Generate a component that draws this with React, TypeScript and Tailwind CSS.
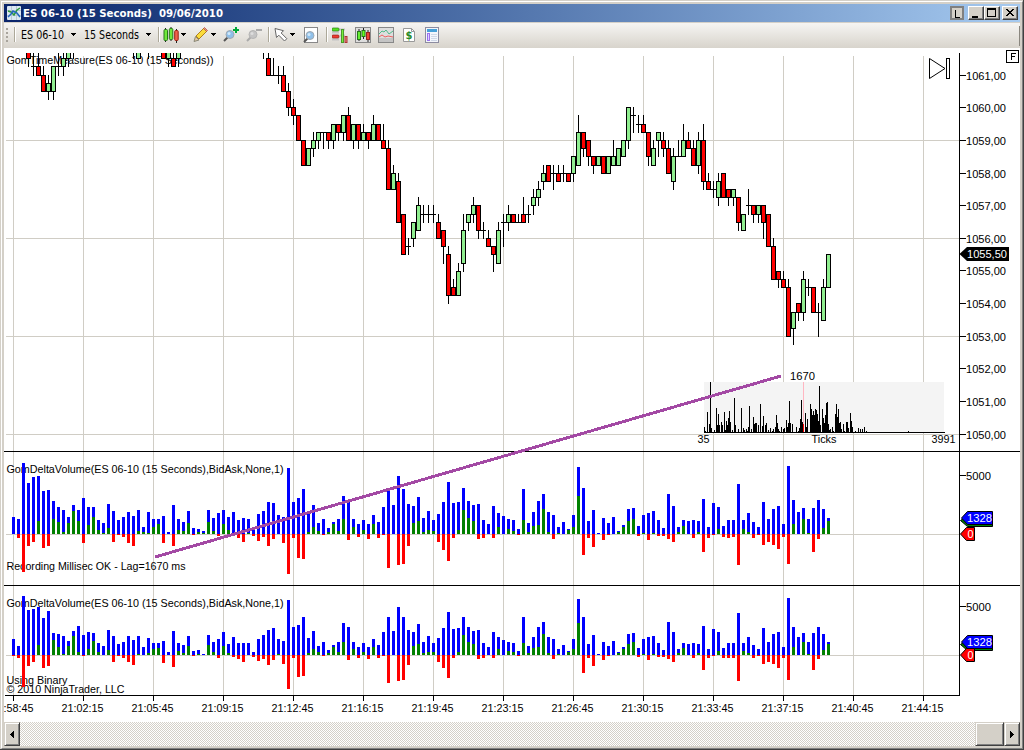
import type { ReactNode } from "react";

const TAHOMA = "font-['DejaVu_Sans_Condensed','Noto_Sans',sans-serif]";

// [x, high, body top, body bottom, low, up] in ticks below 1059,00
type Candle = [number, number, number, number, number, number];

const candles: Candle[] = [
    [28, -12, -12, -10, -9, 0], [33, -12, -9, -9, -8, 0], [38, -12, -9, -8, -8, 0], [43, -9, -8, -6, -6, 0],
    [48, -8, -7, -6, -5, 1], [53, -9, -9, -6, -5, 1], [58, -12, -9, -9, -8, 1], [63, -12, -10, -9, -8, 1],
    [68, -12, -12, -10, -9, 1], [73, -12, -12, -12, -10, 1], [133, -12, -12, -12, -10, 1], [138, -12, -12, -10, -10, 1],
    [148, -12, -12, -12, -10, 1], [163, -12, -12, -10, -10, 0], [168, -12, -12, -10, -9, 1], [173, -12, -10, -9, -9, 0],
    [178, -12, -12, -10, -9, 1],
    [263, -12, -12, -12, -10, 1], [268, -12, -10, -8, -8, 0], [273, -10, -8, -8, -8, 0], [278, -9, -8, -8, -7, 0],
    [283, -9, -8, -6, -6, 0], [288, -7, -6, -4, -3, 0], [293, -5, -4, -3, -2, 0], [298, -3, -3, 0, 0, 0],
    [303, 0, 0, 3, 3, 0], [308, 1, 1, 3, 3, 1], [313, -1, 0, 1, 2, 1], [318, -1, -1, 0, 1, 1],
    [323, -1, -1, -1, 1, 0], [328, -1, -1, 0, 1, 0], [333, -2, -2, 0, 1, 1], [338, -2, -2, -1, 0, 0],
    [343, -3, -3, -1, 0, 1], [348, -4, -3, 0, 0, 0], [353, -2, -2, 0, 1, 1], [358, -2, -2, 0, 1, 0],
    [363, -2, -1, 0, 0, 1], [368, -1, -1, 0, 1, 0], [373, -3, -2, 0, 0, 1], [378, -2, -2, 0, 0, 0],
    [383, -2, 0, 1, 1, 0], [388, 0, 1, 6, 6, 0], [393, 3, 4, 6, 6, 1], [398, 4, 5, 10, 10, 0],
    [403, 9, 9, 14, 14, 0], [408, 12, 13, 13, 14, 1], [413, 10, 10, 12, 13, 1], [418, 7, 8, 11, 11, 1],
    [423, 8, 9, 9, 10, 1], [428, 8, 9, 9, 10, 1], [433, 8, 9, 9, 10, 1], [438, 9, 10, 12, 12, 0],
    [443, 11, 11, 13, 15, 0], [448, 13, 14, 19, 20, 0], [453, 17, 18, 19, 19, 0], [458, 15, 16, 19, 19, 1],
    [463, 9, 11, 15, 16, 1], [468, 9, 9, 10, 11, 1], [473, 7, 8, 9, 10, 1], [478, 8, 8, 11, 12, 0],
    [483, 10, 11, 11, 12, 1], [488, 11, 12, 13, 13, 0], [493, 13, 13, 14, 16, 0], [498, 10, 11, 15, 15, 1],
    [503, 9, 10, 10, 13, 1], [508, 8, 9, 10, 11, 1], [513, 9, 9, 10, 10, 0], [518, 9, 10, 10, 10, 1],
    [523, 7, 9, 10, 10, 0], [528, 8, 9, 9, 10, 1], [533, 6, 7, 8, 9, 1], [538, 5, 6, 7, 8, 1],
    [543, 3, 4, 5, 6, 1], [548, 3, 3, 5, 5, 0], [553, 3, 4, 4, 6, 1], [558, 3, 4, 5, 5, 0],
    [563, 3, 4, 4, 5, 1], [568, 4, 4, 5, 5, 0], [573, 2, 2, 4, 5, 1], [578, -3, -1, 3, 3, 1],
    [583, -1, -1, 1, 2, 0], [588, 0, 0, 2, 3, 0], [593, 2, 2, 3, 4, 0], [598, 2, 2, 3, 3, 1],
    [603, 2, 2, 4, 4, 0], [608, 2, 2, 4, 4, 1], [613, 0, 2, 3, 3, 1], [618, 1, 1, 3, 3, 1],
    [623, 0, 0, 2, 2, 1], [628, -4, -4, 0, 1, 1], [633, -4, -3, -3, -1, 1], [638, -3, -2, -2, -1, 1],
    [643, -3, -2, -1, -1, 0], [648, -1, -1, 2, 3, 0], [653, 0, 1, 3, 3, 1], [658, -1, -1, 0, 2, 1],
    [663, -1, 0, 1, 2, 0], [668, 0, 1, 4, 4, 0], [673, 1, 2, 5, 6, 1], [678, 0, 2, 2, 2, 1],
    [683, -2, 0, 2, 2, 1], [688, -1, 0, 1, 1, 0], [693, 0, 1, 3, 3, 0], [698, -1, 0, 3, 4, 1],
    [703, -2, 0, 5, 6, 0], [708, 4, 5, 6, 6, 0], [713, 5, 6, 6, 7, 1], [718, 4, 5, 7, 8, 1],
    [723, 4, 4, 7, 7, 0], [728, 6, 6, 7, 8, 0], [733, 6, 6, 7, 8, 1], [738, 7, 7, 10, 11, 0],
    [743, 9, 9, 11, 11, 1], [748, 6, 8, 8, 9, 1], [753, 8, 8, 9, 10, 0], [758, 8, 8, 9, 10, 1],
    [763, 8, 8, 10, 12, 0], [768, 9, 9, 13, 13, 0], [773, 12, 13, 17, 17, 0], [778, 16, 16, 17, 18, 0],
    [783, 16, 17, 18, 18, 0], [788, 17, 18, 24, 24, 0], [793, 21, 21, 23, 25, 1], [798, 20, 20, 21, 22, 0],
    [803, 16, 17, 21, 22, 1], [808, 17, 18, 18, 19, 1], [813, 18, 18, 21, 21, 0], [818, 20, 21, 21, 24, 1],
    [823, 17, 18, 22, 22, 1], [828, 14, 14, 18, 18, 1],
];

// volume, delta pairs, one per bar
const volumeA = [
    17, 0, 15, -4, 71, -38, 51, -12, 57, -8, 58, 13, 43, -14, 44, -12, 33, 15, 27, 12,
    24, 2, 17, 11, 29, 23, 24, 13, 36, -9, 27, 9, 27, 17, 14, 4, 11, 1, 30, 6,
    23, -8, 14, -1, 17, -3, 22, -9, 18, -12, 24, 3, 7, 2, 22, 1, 15, 7, 15, 10,
    18, -9, 2, 0, 29, -12, 15, 4, 12, 3, 23, 11, 6, -1, 5, 2, 3, 1, 24, 12,
    16, 3, 21, -2, 24, 10, 17, 4, 22, -2, 14, -4, 16, -8, 15, 1, 4, -2, 20, -7,
    23, -3, 32, -12, 31, -5, 19, 0, 17, -9, 66, -40, 32, -4, 36, -24, 45, -25, 20, 2,
    29, 7, 11, 3, 15, -1, 6, 2, 12, 10, 15, 3, 38, 15, 34, -6, 15, 7, 10, -3,
    14, 4, 10, -5, 19, 10, 12, -4, 27, -1, 45, -34, 29, 0, 58, -31, 45, -30, 30, -12,
    28, 11, 37, 13, 16, 2, 23, 4, 14, 3, 20, -8, 32, -16, 52, -27, 31, -4, 32, 4,
    46, 24, 33, 16, 29, 13, 30, -5, 14, -4, 10, 0, 28, -4, 21, 7, 18, 0, 15, 5,
    14, 3, 5, -1, 45, 14, 11, 2, 22, 8, 33, 9, 40, 25, 22, 2, 19, -5, 7, 1,
    12, 0, 5, 4, 19, 7, 67, 38, 46, -21, 13, -4, 24, -13, 1, 0, 16, -6, 11, -1,
    17, 0, 3, 2, 9, 7, 25, 13, 26, 15, 8, -2, 19, 1, 21, -6, 23, 1, 14, -2,
    6, -2, 40, -5, 28, -8, 7, 2, 14, 8, 13, 0, 14, -4, 13, 2, 35, -18, 7, -4,
    31, -1, 27, 5, 8, -3, 14, -4, 14, -3, 50, -31, 14, 5, 21, 2, 12, -4, 7, -1,
    32, -11, 15, -8, 25, -11, 28, -15, 10, -3, 68, -30, 34, 10, 22, 0, 26, 15, 15, 1,
    26, -18, 34, -5, 25, 6, 16, 13,
];

const volumeBHead = [
    16, -1, 9, -3, 59, -32, 45, -11, 46, -7, 48, 10, 37, -13, 44, -11, 22, 15, 21, 8,
    19, 1, 14, 9, 24, 19, 29, 3, 20, -1, 23, 6, 22, 14, 12, 3, 9, 0, 25, 5,
    19, -7, 11, -1, 13, -3, 19, -7, 15, -10, 19, 1, 8, 0, 17, 2, 12, 6, 12, 7,
    14, -8, 3, 0, 24, -12, 12, 4, 10, 2, 19, 9, 4, -1, 5, 1, 1, 0, 20, 10,
    13, 3, 16, -3, 23, 9, 11, 2, 18, -2, 12, -4, 12, -7, 12, 0, 3, -2, 16, -6,
    20, -4, 25, -10, 27, -5, 16, 1, 14, -9, 55, -34, 28, -3, 30, -22,
];
const volumeB = volumeBHead.concat(
    volumeA.slice(volumeBHead.length).map((v) => Math.round(v * 0.835))
);

// offset from x=704, bar height
const tickBars: [number, number][] = [
    [0, 5], [1, 1], [3, 20], [5, 8], [6, 50], [7, 4], [10, 2], [12, 24], [13, 7], [14, 18], [15, 7], [17, 10],
    [18, 7], [20, 20], [21, 2], [22, 11], [23, 7], [24, 14], [25, 21], [26, 10], [28, 2], [30, 34], [31, 7],
    [34, 3], [37, 24], [39, 4], [40, 2], [42, 3], [43, 1], [44, 5], [45, 26], [47, 3], [49, 15], [50, 8],
    [51, 9], [52, 9], [54, 7], [56, 28], [58, 6], [59, 16], [61, 7], [62, 9], [64, 2], [66, 4], [68, 1],
    [69, 3], [71, 5], [72, 17], [73, 9], [74, 3], [75, 1], [77, 5], [79, 3], [80, 4], [82, 12], [83, 5],
    [84, 9], [85, 31], [86, 9], [88, 8], [92, 5], [94, 1], [95, 4], [96, 13], [97, 32], [98, 10], [101, 19],
    [102, 5], [103, 13], [106, 28], [107, 23], [108, 17], [109, 21], [110, 17], [111, 23], [112, 22],
    [113, 18], [114, 11], [115, 46], [116, 7], [118, 23], [119, 14], [120, 9], [121, 17], [122, 29],
    [123, 30], [124, 8], [125, 2], [126, 3], [128, 5], [129, 1], [131, 18], [132, 28], [133, 15], [134, 23],
    [135, 9], [136, 10], [137, 3], [139, 8], [140, 1], [142, 10], [143, 10], [144, 4], [146, 19], [147, 11],
    [148, 5], [151, 1], [154, 4], [156, 3], [158, 3], [160, 5], [162, 1], [204, 1],
];

const prices: [string, number][] = [
    ["1061,00", 75], ["1060,00", 107], ["1059,00", 140], ["1058,00", 173], ["1057,00", 205], ["1056,00", 238],
    ["1055,00", 270], ["1054,00", 303], ["1053,00", 336], ["1052,00", 368], ["1051,00", 401], ["1050,00", 434],
];

const times = [
    "20:58:45", "21:02:15", "21:05:45", "21:09:15", "21:12:45", "21:16:15", "21:19:45",
    "21:23:15", "21:26:45", "21:30:15", "21:33:45", "21:37:15", "21:40:45", "21:44:15",
];

const yOf = (k: number) => Math.round(140 + k * 8.17);

export default function App() {
    return (
        <div className={`flex h-[750px] w-[1024px] flex-col border-r border-b border-[#404040] bg-[#d4d0c8] ${TAHOMA}`}>
            <div className="flex min-h-0 flex-1 flex-col border-t border-l border-[#d4d0c8]">
                <div className="flex min-h-0 flex-1 flex-col border border-t-white border-r-[#808080] border-b-[#808080] border-l-white p-[2px]">
                    <TitleBar />
                    <Toolbar />
                    <Chart />
                    <ScrollBar />
                </div>
            </div>
        </div>
    );
}

function TitleBar() {
    return (
        <div className="flex h-[18px] shrink-0 items-center bg-linear-to-r from-[#0a246a] to-[#a6caf0] pr-[2px] pl-[3px]">
            <svg width="14" height="14" viewBox="0 0 14 14" className="shrink-0">
                <rect width="14" height="14" rx="1" fill="#dce8f2" />
                <path d="M0 4.5h14M0 9.5h14M4.5 0v14M9.5 0v14" stroke="#b9c8d4" />
                <path d="M1 5l3 1 3 3 3-5 3-2" fill="none" stroke="#2e9a3c" strokeWidth="1.5" />
                <path d="M1 11l3-3 2-3 4 2 3 4" fill="none" stroke="#2466c0" strokeWidth="1.5" />
            </svg>
            <svg width="204" height="18" className="ml-[2px] shrink-0">
                <text x="0" y="13" fill="#fff" fontSize="11" fontWeight="bold" textLength="200" lengthAdjust="spacingAndGlyphs" xmlSpace="preserve" className="whitespace-pre">
                    {"ES 06-10 (15 Seconds)  09/06/2010"}
                </text>
            </svg>
            <div className="ml-auto flex h-[14px]">
                <svg width="14" height="14" className="mr-1" shapeRendering="crispEdges">
                    <rect width="14" height="14" fill="#808080" />
                    <rect x="2" y="2" width="10" height="10" fill="#d4d0c8" />
                    <path d="M5.5 4v7.5H10" fill="none" stroke="#000" />
                </svg>
                <CaptionButton>
                    <rect x="3" y="9" width="6" height="2" />
                </CaptionButton>
                <CaptionButton>
                    <path d="M2 1h9v9H2zM3 3v6h7V3z" fillRule="evenodd" />
                </CaptionButton>
                <div className="w-[2px]" />
                <CaptionButton>
                    <path d="M3 2h2v1h1v1h2V3h1V2h2v1h-1v1H9v1H8v1h1v1h1v1h1v1H9V8H8V7H6v1H5v1H3V8h1V7h1V6h1V5H5V4H4V3H3z" />
                </CaptionButton>
            </div>
        </div>
    );
}

function CaptionButton({ children }: { children: ReactNode }) {
    return (
        <div className="h-[14px] w-4 border border-t-white border-r-[#404040] border-b-[#404040] border-l-white bg-[#d4d0c8] shadow-[inset_-1px_-1px_0_#808080]">
            <svg width="14" height="12" shapeRendering="crispEdges">
                {children}
            </svg>
        </div>
    );
}

function Arrow() {
    return (
        <svg width="5" height="3" className="shrink-0" shapeRendering="crispEdges">
            <path d="M0 0h5v1H4v1H3v1H2V2H1V1H0z" />
        </svg>
    );
}

function Separator() {
    return <div className="h-[15px] w-[2px] shrink-0 border-r border-l border-r-white border-l-[#aca899]" />;
}

function ToolText({ text, width }: { text: string; width: number }) {
    return (
        <svg width={width} height="16" className="shrink-0 overflow-visible">
            <text x="0" y="12" fontSize="11.5" textLength={width} lengthAdjust="spacingAndGlyphs">
                {text}
            </text>
        </svg>
    );
}

function Magnifier({ muted = false }: { muted?: boolean }) {
    return (
        <g>
            <path d="M1 14l4-4" stroke={muted ? "#aaa" : "#555"} strokeWidth="2" />
            <circle cx="7" cy="7.5" r="4" fill={muted ? "#c4c4c4" : "#8fc0ea"} stroke={muted ? "#b4b4b4" : "#a0a8b0"} />
            <circle cx="6" cy="6.5" r="1.5" fill={muted ? "#ddd" : "#cfe8fa"} />
        </g>
    );
}

function Icon({ children }: { children: ReactNode }) {
    return (
        <svg width="16" height="16" viewBox="0 0 16 16" className="shrink-0">
            {children}
        </svg>
    );
}

function Toolbar() {
    return (
        <div className="flex h-[26px] shrink-0 items-center border-t border-[#d4d0c8] bg-linear-to-b from-[#f6f5f3] to-[#d8d4cc] pb-[2px] pl-[2px]">
            <svg width="3" height="16" className="shrink-0" fill="#a8a49c">
                <path d="M0 1h2v2H0zM0 5h2v2H0zM0 9h2v2H0zM0 13h2v2H0z" />
            </svg>
            <div className="w-[5px]" />
            <Separator />
            <div className="w-[5px]" />
            <ToolText text="ES 06-10" width={43} />
            <div className="w-[7px]" />
            <Arrow />
            <div className="w-[8px]" />
            <ToolText text="15 Seconds" width={55} />
            <div className="w-[7px]" />
            <Arrow />
            <div className="w-[7px]" />
            <Separator />
            <div className="w-[3px]" />
            <svg width="16" height="16" className="shrink-0">
                <path d="M2.5 1v14M8 0v14M13.5 2v14" stroke="#222" />
                <rect x="1" y="2.5" width="3.500" height="11" rx="1" fill="#6fe83a" stroke="#27751a" />
                <rect x="6.300" y="1.500" width="3.500" height="11" rx="1" fill="#6fe83a" stroke="#27751a" />
                <rect x="11.700" y="3.500" width="3.500" height="10" rx="1" fill="#f0624c" stroke="#962010" />
            </svg>
            <div className="w-[2px]" />
            <Arrow />
            <div className="w-[7px]" />
            <Icon>
                <path d="M1 14.500l1.500-5 3.500 3.500z" fill="#e8c8a0" stroke="#887" />
                <path d="M3 9l8-8 3 3-8 8z" fill="#fbdc3c" stroke="#b08020" />
                <path d="M10.500 1.500l1-1 3 3-1 1z" fill="#f09080" stroke="#a05040" strokeWidth=".7" />
            </Icon>
            <div className="w-[2px]" />
            <Arrow />
            <div className="w-[7px]" />
            <Icon>
                <Magnifier />
                <path d="M13 0v6M10 3h6" stroke="#00a838" strokeWidth="2" />
            </Icon>
            <div className="w-[7px]" />
            <Icon>
                <Magnifier muted />
                <path d="M10 3h6" stroke="#aaa" strokeWidth="2" />
            </Icon>
            <div className="w-[6px]" />
            <Separator />
            <div className="w-[4px]" />
            <Icon>
                <path d="M1 1.500l1.500 9 2.300-2.300 5.700 5.800 2.300-2.300L7.200 6l2.300-2.300z" fill="#fff" stroke="#666" />
            </Icon>
            <Arrow />
            <div className="w-[8px]" />
            <Icon>
                <rect x="1.5" y=".5" width="13" height="15" fill="#fff" stroke="#888" />
                <g transform="translate(0 1)">
                    <Magnifier />
                </g>
            </Icon>
            <div className="w-[7px]" />
            <Separator />
            <div className="w-[4px]" />
            <Icon>
                <path d="M7 2.500h6M0 5.500h7M8 8.500h5M0 12.500h7" stroke="#c4c4c4" strokeWidth="2" />
                <rect x="0" y="1" width="7" height="3" rx="1" fill="#55e022" stroke="#288014" strokeWidth=".7" />
                <rect x="0" y="8" width="7" height="3" rx="1" fill="#ee3a30" stroke="#902018" strokeWidth=".7" />
                <rect x="9.500" y="2.500" width="2" height="13" fill="#76f03c" stroke="#4c9a2a" />
                <rect x="13" y="9.500" width="2" height="6" fill="#e88" stroke="#a33" />
            </Icon>
            <div className="w-[7px]" />
            <Icon>
                <rect x=".5" y=".5" width="15" height="15" fill="#ddd" stroke="#888" />
                <path d="M4 2v12M8.500 1v11M13 3v12" stroke="#222" />
                <rect x="2.500" y="4.500" width="3" height="8" fill="#6e3" stroke="#27751a" />
                <rect x="7" y="3.500" width="3" height="6" fill="#6f2" stroke="#27751a" />
                <rect x="11.500" y="5.500" width="3" height="7" fill="#e43" stroke="#922" />
            </Icon>
            <div className="w-[7px]" />
            <Icon>
                <rect x=".5" y=".5" width="15" height="15" fill="#dedede" stroke="#888" />
                <rect x="1" y="11" width="14" height="4" fill="#c4c4c4" />
                <path d="M1 7l3-3 2 1 2-2 3 4 4-3" fill="none" stroke="#50b888" />
                <path d="M1 10l3-2 3 2 3-1 5 1" fill="none" stroke="#ee6060" />
            </Icon>
            <div className="w-[8px]" />
            <Icon>
                <path d="M1.500 1.500h8l3 3v10h-11z" fill="#fff" stroke="#999" />
                <path d="M9.500 1.500v3h3" fill="none" stroke="#999" />
                <text x="3.600" y="12" fontSize="11" fontWeight="bold" fill="#278a27">$</text>
            </Icon>
            <div className="w-[6px]" />
            <Icon>
                <rect x="1.500" y=".5" width="13" height="15" fill="#f4f6fb" stroke="#8c8ca0" />
                <rect x="3" y="2" width="10" height="3" fill="#46a0d8" />
                <rect x="3.500" y="6.500" width="2" height="7" fill="#ddd0ff" stroke="#9a70ee" />
                <path d="M7 7.500h6M7 9.500h6M7 11.500h6M7 13.500h6" stroke="#cfd8e8" />
            </Icon>
            <div className="mt-[3px] ml-auto h-5 w-px bg-[#8a877f]" />
        </div>
    );
}

type LabelProps = {
    x: number;
    y: number;
    w: number;
    fill?: string;
    children: string;
};

function Label({ x, y, w, fill = "#000", children }: LabelProps) {
    return (
        <text x={x} y={y} fill={fill} textLength={w} lengthAdjust="spacingAndGlyphs">
            {children}
        </text>
    );
}

function VolumeBars({ data, base }: { data: number[]; base: number }) {
    const bars = [];
    for (let i = 0; i < data.length; i += 2) {
        const x = 12 + (i / 2) * 5;
        const [vol, delta] = [data[i], data[i + 1]];
        bars.push(
            <g key={i}>
                <rect x={x} y={base - vol} width="3" height={vol} fill="#00f" />
                {delta > 0 && <rect x={x} y={base - delta} width="3" height={delta} fill="#008000" />}
                {delta < 0 && <rect x={x} y={base} width="3" height={-delta} fill="#f00" />}
            </g>
        );
    }
    return <g>{bars}</g>;
}

function VolumeTags({ y, zeroY }: { y: number; zeroY: number }) {
    return (
        <g>
            <path d={`M960.5 ${y + 9.5}l7 -5h25v11h-25z`} fill="#008000" stroke="#000" />
            <path d={`M961.5 ${y + 7}l6 -6.500h25v13h-25z`} fill="#00f" stroke="#000" />
            <path d={`M960.5 ${zeroY}l6 -6.500h8v13h-8z`} fill="#f00" stroke="#000" />
            <Label x={967} y={y + 11} w={25} fill="#fff">1328</Label>
            <Label x={967.5} y={zeroY + 4} w={6} fill="#fff">0</Label>
        </g>
    );
}

function Chart() {
    return (
        <svg
            width="1016"
            height="674"
            viewBox="4 48 1016 674"
            className="block shrink-0 bg-white font-['Liberation_Sans',sans-serif] text-[11px]"
        >
            {/* grid */}
            <g fill="#d0cdc5" shapeRendering="crispEdges">
                {[140, 238, 336, 434, 534, 655].map((y) => (
                    <rect key={y} x="6" y={y} width="953" height="1" />
                ))}
                {times.map((t, i) => (
                    <rect key={t} x={13 + i * 70} y="56" width="1" height="639" />
                ))}
            </g>

            <Label x={6.5} y={64} w={207}>GomTimeMeasure(ES 06-10 (15 Seconds))</Label>
            <Label x={6.5} y={473} w={277}>GomDeltaVolume(ES 06-10 (15 Seconds),BidAsk,None,1)</Label>
            <Label x={6.5} y={570} w={179}>Recording Millisec OK - Lag=1670 ms</Label>
            <Label x={6.5} y={607} w={277}>GomDeltaVolume(ES 06-10 (15 Seconds),BidAsk,None,1)</Label>
            <Label x={6.5} y={684} w={61}>Using Binary</Label>
            <Label x={6.5} y={693} w={118}>© 2010 NinjaTrader, LLC</Label>

            <clipPath id="price">
                <rect x="4" y="53" width="955" height="398" />
            </clipPath>
            <g clipPath="url(#price)" shapeRendering="crispEdges">
                {candles.map(([x, high, top, bottom, low, up]) => {
                    const y = yOf(top);
                    const h = yOf(bottom) - y + 1;
                    return (
                        <g key={x}>
                            <rect x={x} y={yOf(high)} width="1" height={yOf(low) - yOf(high) + 1} />
                            <rect x={x - 2} y={y} width="5" height={h} />
                            {h > 2 && (
                                <rect x={x - 1} y={y + 1} width="3" height={h - 2} fill={up ? "#90ee90" : "#f00"} />
                            )}
                        </g>
                    );
                })}
            </g>

            <g shapeRendering="crispEdges">
                <VolumeBars data={volumeA} base={534} />
                <VolumeBars data={volumeB} base={655} />
            </g>

            {/* tick histogram */}
            <g shapeRendering="crispEdges">
                <rect x="704" y="382" width="240" height="51" fill="#f4f4f4" />
                {tickBars.map(([x, h]) => (
                    <rect key={x} x={704 + x} y={432 - h} width="1" height={h} />
                ))}
                <rect x="704" y="432" width="241" height="1" />
                <rect x="803" y="382" width="1" height="42" fill="#ffb6c1" />
                <rect x="803" y="424" width="1" height="8" fill="#f00" />
            </g>
            <Label x={790} y={380} w={25}>1670</Label>
            <Label x={697.5} y={443} w={12}>35</Label>
            <Label x={811.5} y={443} w={25}>Ticks</Label>
            <Label x={931.5} y={443} w={24}>3991</Label>

            {/* axes and panel borders */}
            <g shapeRendering="crispEdges">
                <rect x="959" y="53" width="1" height="643" />
                <rect x="4" y="451" width="1016" height="1" />
                <rect x="4" y="585" width="1016" height="1" />
                <rect x="5" y="695" width="955" height="1" />
                {prices.map(([label, y]) => (
                    <rect key={label} x="960" y={y} width="6" height="1" />
                ))}
                <rect x="960" y="475" width="6" height="1" />
                <rect x="960" y="606" width="6" height="1" />
                {times.map((t, i) => (
                    <rect key={t} x={13 + i * 70} y="696" width="1" height="5" />
                ))}
            </g>
            {prices.map(([label, y]) => (
                <Label key={label} x={966} y={y + 5} w={40}>{label}</Label>
            ))}
            <Label x={966} y={480} w={25}>5000</Label>
            <Label x={966} y={611} w={25}>5000</Label>
            {times.map((t, i) => (
                <Label key={t} x={-8.5 + i * 70} y={712} w={42}>{t}</Label>
            ))}

            <path d="M959.500 254l7.500-7h42v14h-42z" />
            <Label x={967} y={258} w={40} fill="#fff">1055,50</Label>
            <VolumeTags y={511} zeroY={534} />
            <VolumeTags y={635} zeroY={655} />

            {/* scroll-to-last control and fixed-scale button */}
            <path d="M929.500 58.500v20l15.500-10z" fill="#fff" stroke="#000" />
            <rect x="946.500" y="58.500" width="3" height="20" fill="#fff" stroke="#000" />
            <rect x="1006.500" y="50.500" width="12" height="12" fill="#fff" stroke="#000" />
            <path d="M1011.500 60v-6.500h4M1011.500 56.500h3.500" fill="none" stroke="#000" shapeRendering="crispEdges" />

            <path d="M155 557L781 376" stroke="#a349a4" strokeWidth="3" shapeRendering="crispEdges" />
        </svg>
    );
}

const RAISED =
    "shrink-0 border border-t-[#d4d0c8] border-l-[#d4d0c8] border-r-[#404040] border-b-[#404040] bg-[#d4d0c8] shadow-[inset_1px_1px_0_#fff,inset_-1px_-1px_0_#808080]";

function ScrollBar() {
    return (
        <div className="flex h-6 shrink-0 bg-[conic-gradient(#fff_25%,#d4d0c8_0_50%,#fff_0_75%,#d4d0c8_0)] bg-[length:2px_2px]">
            <div className={`flex w-4 items-center justify-center ${RAISED}`}>
                <svg width="4" height="7" shapeRendering="crispEdges">
                    <path d="M4 0v7H3V6H2V5H1V4H0V3h1V2h1V1h1V0z" />
                </svg>
            </div>
            <div className={`ml-auto w-[29px] ${RAISED}`} />
            <div className={`flex w-4 items-center justify-center ${RAISED}`}>
                <svg width="4" height="7" shapeRendering="crispEdges">
                    <path d="M0 0v7h1V6h1V5h1V4h1V3H3V2H2V1H1V0z" />
                </svg>
            </div>
        </div>
    );
}
